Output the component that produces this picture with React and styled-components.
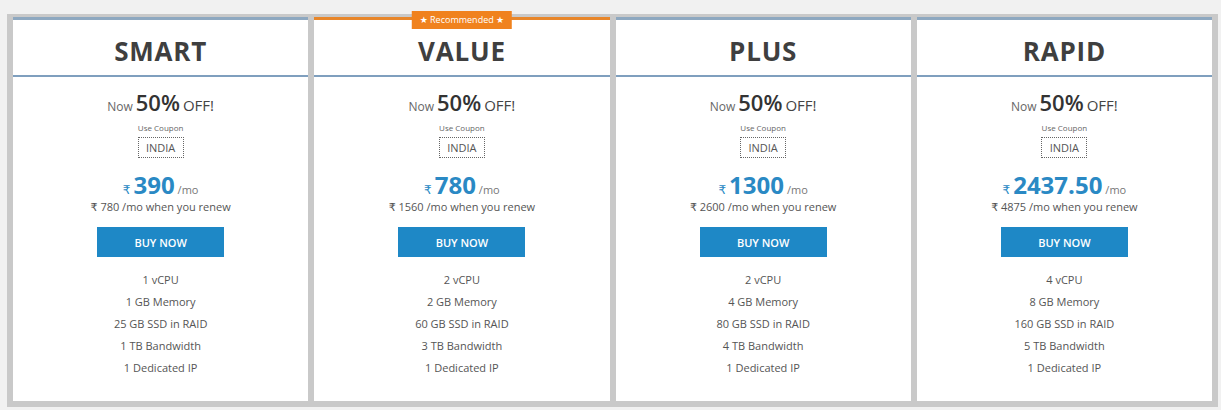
import React from 'react';
import styled, { createGlobalStyle } from 'styled-components';

const GlobalStyle = createGlobalStyle`
    body {
        margin: 0;
        background: #f1f1f1;
        font-family: "Open Sans", "DejaVu Sans", sans-serif;
    }
`;

const Page = styled.div`
    width: 1221px;
    height: 410px;
    padding-top: 14px;
    box-sizing: border-box;
`;

const Frame = styled.div`
    margin: 0 3px 0 7px;
    padding: 3px 6px 6px 6px;
    background: #c9c9c9;
    display: grid;
    grid-template-columns: repeat(4, 1fr);
    gap: 6px;
`;

const Card = styled.div`
    position: relative;
    background: #fff;
    border-top: 3px solid ${props => props.featured ? '#e8862a' : '#8ea8c0'};
    display: flex;
    flex-direction: column;
    align-items: center;
    padding-bottom: 22px;
`;

const Badge = styled.div`
    position: absolute;
    top: -9px;
    left: 50%;
    transform: translateX(-50%);
    background: #f0821e;
    color: #fff;
    font-size: 9px;
    line-height: 18px;
    padding: 0 8px;
    white-space: nowrap;
`;

const Header = styled.div`
    width: 100%;
    height: 57px;
    box-sizing: border-box;
    padding-top: 7px;
    border-bottom: 2px solid #7f9fbe;
    display: flex;
    align-items: center;
    justify-content: center;
    font-size: 26px;
    font-weight: 700;
    color: #3f3f3f;
    letter-spacing: 0.8px;
`;

const Offer = styled.div`
    margin-top: 11px;
    height: 28px;
    display: flex;
    align-items: baseline;
    gap: 3px;
    line-height: 28px;
    color: #444;
`;

const Now = styled.span`
    font-size: 12px;
    color: #666;
`;

const Percent = styled.span`
    font-size: 22px;
    font-weight: 600;
    color: #333;
`;

const Off = styled.span`
    font-size: 15px;
`;

const CouponLabel = styled.div`
    margin-top: 7px;
    font-size: 8px;
    line-height: 10px;
    color: #666;
`;

const Coupon = styled.div`
    margin-top: 4px;
    width: 46px;
    height: 21px;
    box-sizing: border-box;
    border: 1px dotted #666;
    font-size: 11px;
    line-height: 19px;
    text-align: center;
    color: #555;
`;

const Price = styled.div`
    margin-top: 13px;
    height: 28px;
    line-height: 28px;
    display: flex;
    align-items: baseline;
    gap: 3px;
    color: #2a89c4;
`;

const Rupee = styled.span`
    font-size: 12px;
`;

const Amount = styled.span`
    font-size: 24px;
    font-weight: 700;
`;

const Per = styled.span`
    font-size: 11px;
    color: #777;
`;

const Renew = styled.div`
    font-size: 11px;
    line-height: 16px;
    color: #555;
`;

const BuyButton = styled.button`
    margin-top: 12px;
    width: 127px;
    height: 30px;
    border: none;
    background: #1e88c6;
    color: #fff;
    font-family: inherit;
    font-size: 11px;
    font-weight: 600;
`;

const Features = styled.ul`
    list-style: none;
    margin: 12px 0 0 0;
    padding: 0;
    text-align: center;
`;

const Feature = styled.li`
    font-size: 11px;
    line-height: 22px;
    color: #555;
`;

const plans = [
    { name: 'SMART', price: '390', renew: '780', cpu: 1, mem: 1, ssd: 25, bw: 1 },
    { name: 'VALUE', price: '780', renew: '1560', cpu: 2, mem: 2, ssd: 60, bw: 3, featured: true },
    { name: 'PLUS', price: '1300', renew: '2600', cpu: 2, mem: 4, ssd: 80, bw: 4 },
    { name: 'RAPID', price: '2437.50', renew: '4875', cpu: 4, mem: 8, ssd: 160, bw: 5 },
];

function App() {
    return (
        <Page>
            <GlobalStyle />
            <Frame>
                {plans.map(p => (
                    <Card key={p.name} featured={p.featured}>
                        {p.featured && <Badge>★ Recommended ★</Badge>}
                        <Header>{p.name}</Header>
                        <Offer>
                            <Now>Now</Now>
                            <Percent>50%</Percent>
                            <Off>OFF!</Off>
                        </Offer>
                        <CouponLabel>Use Coupon</CouponLabel>
                        <Coupon>INDIA</Coupon>
                        <Price>
                            <Rupee>₹</Rupee>
                            <Amount>{p.price}</Amount>
                            <Per>/mo</Per>
                        </Price>
                        <Renew>₹ {p.renew} /mo when you renew</Renew>
                        <BuyButton>BUY NOW</BuyButton>
                        <Features>
                            <Feature>{p.cpu} vCPU</Feature>
                            <Feature>{p.mem} GB Memory</Feature>
                            <Feature>{p.ssd} GB SSD in RAID</Feature>
                            <Feature>{p.bw} TB Bandwidth</Feature>
                            <Feature>1 Dedicated IP</Feature>
                        </Features>
                    </Card>
                ))}
            </Frame>
        </Page>
    );
}

export default App;
